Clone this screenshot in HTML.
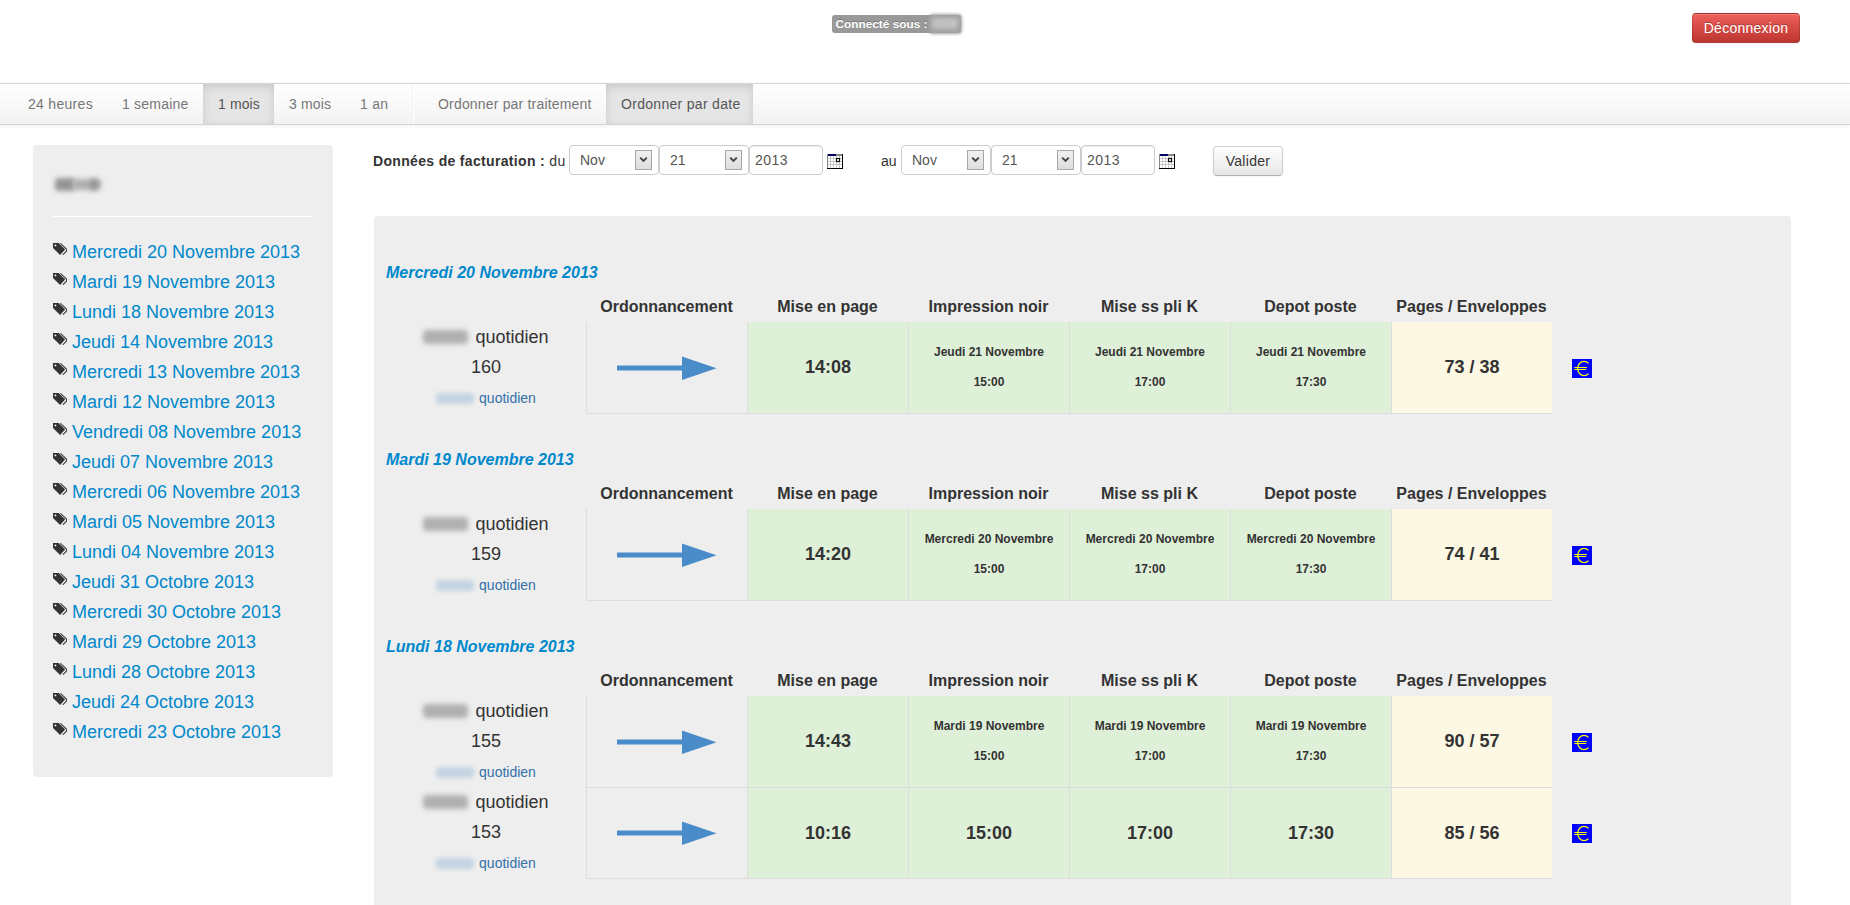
<!DOCTYPE html><html><head><meta charset="utf-8"><title>Facturation</title><style>
*{box-sizing:border-box}
html,body{margin:0;padding:0}
body{width:1850px;height:905px;overflow:hidden;position:relative;background:#fff;font-family:"Liberation Sans", sans-serif;color:#333;font-size:14px;line-height:20px}
.a{position:absolute;white-space:nowrap}
.lbl{left:832px;top:15px;width:129px;height:18px;background:#999;border-radius:3px;color:#fff;font-weight:bold;font-size:11.844px;line-height:14px;padding:2px 4px;text-shadow:0 -1px 0 rgba(0,0,0,.25);overflow:visible}
.blur-g{position:absolute;background:#b4b4b4;filter:blur(2px);border-radius:3px}
.btn-danger{left:1692px;top:13px;width:108px;height:30px;border-radius:4px;color:#fff;text-align:center;font-size:14px;line-height:20px;padding:4px 0;
 background:linear-gradient(#ee5f5b,#bd362f);border:1px solid rgba(0,0,0,.15);border-bottom-color:rgba(0,0,0,.3);box-shadow:inset 0 1px 0 rgba(255,255,255,.2),0 1px 2px rgba(0,0,0,.05);text-shadow:0 -1px 0 rgba(0,0,0,.25)}
.navbar{left:0;top:83px;width:1850px;height:42px;background:linear-gradient(#ffffff,#f2f2f2);border-top:1px solid #d4d4d4;border-bottom:1px solid #d4d4d4;box-shadow:0 1px 4px rgba(0,0,0,.065)}
.nav a{position:absolute;top:0;height:40px;padding:10px 0 10px 15px;color:#777;font-size:14px;line-height:20px;white-space:nowrap}
.nav a.act{background:#e5e5e5;color:#555;box-shadow:inset 0 3px 8px rgba(0,0,0,.125)}
.divv{position:absolute;top:0;height:40px;width:2px;border-left:1px solid #f2f2f2;border-right:1px solid #fff}
.well{left:33px;top:145px;width:300px;height:632px;background:#eee;border-radius:4px}
.side a{position:absolute;left:72px;color:#0088cc;font-size:18px;line-height:30px;white-space:nowrap}
.tag{position:absolute;left:53px}
.fl{font-size:14px;line-height:20px}
.sel{position:absolute;top:145px;height:30px;width:90px;border:1px solid #ccc;border-radius:4px;background:#fff;color:#555}
.sel .t{position:absolute;left:10px;top:4px;font-size:14px;line-height:20px}
.sel .ar{position:absolute;left:65px;top:4px;width:17px;height:20px;border:1px solid #a6a6a6;background:linear-gradient(#f0f0f0,#dedede)}
.inp{position:absolute;top:145px;height:30px;width:74px;border:1px solid #ccc;border-radius:4px;background:#fff;color:#555;box-shadow:inset 0 1px 1px rgba(0,0,0,.075)}
.inp .t{position:absolute;left:6px;top:4px;font-size:14px;line-height:20px}
.btn{left:1213px;top:146px;width:70px;height:30px;border-radius:4px;text-align:center;font-size:14px;line-height:20px;padding:4px 0;color:#333;
 background:linear-gradient(#ffffff,#e6e6e6);border:1px solid #cfcfcf;border-bottom-color:#b3b3b3;box-shadow:inset 0 1px 0 rgba(255,255,255,.2),0 1px 2px rgba(0,0,0,.05);text-shadow:0 1px 1px rgba(255,255,255,.75)}
.main{left:374px;top:216px;width:1417px;height:720px;background:#eee;border-radius:4px}
.ttl{position:absolute;left:386px;color:#0088cc;font-weight:bold;font-style:italic;font-size:16px;line-height:20px;white-space:nowrap}
.th{position:absolute;width:161px;text-align:center;font-weight:bold;font-size:16px;line-height:20px;white-space:nowrap}
.cell{position:absolute;width:161px;border-left:1px solid #ddd;border-bottom:1px solid #ddd}
.g{background:#dff0d8}
.y{background:#fcf8e3}
.ct{position:absolute;left:0;width:100%;text-align:center;font-weight:bold;white-space:nowrap}
.big{font-size:18px;line-height:30px}
.sm{font-size:12px;line-height:20px}
.lc{position:absolute;left:386px;width:200px;text-align:center;white-space:nowrap}
.q1{font-size:18px;line-height:30px;color:#333}
.q3{font-size:14px;line-height:20px;color:#3370a8}
.bn{display:inline-block;width:45px;height:14px;vertical-align:-1px;background:#b0b0b0;filter:blur(2.5px);border-radius:4px;margin-right:7px}
.bl{display:inline-block;width:38px;height:11px;vertical-align:-1px;background:#c3d4e2;filter:blur(2px);border-radius:4px;margin-right:5px}
</style></head><body>
<div class="a lbl" style="padding-left:3.5px">Connecté sous : </div><div class="blur-g" style="left:929px;top:14px;width:33px;height:20px;background:#a2a2a2;filter:blur(1.5px);border-radius:4px"></div><div class="blur-g" style="left:932px;top:18px;width:26px;height:11px;background:#c2c2c2;filter:blur(2px)"></div>
<div class="a btn-danger" style="letter-spacing:0.25px">Déconnexion</div>
<div class="a navbar"><div class="nav">
<a class="" style="left:13px;width:94px;letter-spacing:0.3px">24 heures</a>
<a class="" style="left:107px;width:96px;letter-spacing:0.22px">1 semaine</a>
<a class="act" style="left:203px;width:71px;letter-spacing:0.1px">1 mois</a>
<a class="" style="left:274px;width:71px;letter-spacing:0.15px">3 mois</a>
<a class="" style="left:345px;width:58px;letter-spacing:0.25px">1 an</a>
<a class="" style="left:423px;width:183px;letter-spacing:0.18px">Ordonner par traitement</a>
<a class="act" style="left:606px;width:147px;letter-spacing:0.3px">Ordonner par date</a>
<div class="divv" style="left:412px"></div>
</div></div>
<div class="a well"></div>
<div class="blur-g" style="left:55px;top:178px;width:20px;height:13px;background:#959595;filter:blur(2.5px)"></div>
<div class="blur-g" style="left:73px;top:179px;width:16px;height:11px;background:#b0b0b0;filter:blur(2.5px)"></div>
<div class="blur-g" style="left:87px;top:178px;width:14px;height:13px;background:#999;filter:blur(2.5px);border-radius:6px"></div>
<div class="a" style="left:53px;top:215px;width:260px;height:2px;border-top:1px solid #eee;border-bottom:1px solid #fff"></div>
<div class="side">
<div class="tag" style="top:243px;line-height:0"><svg width="14" height="12" viewBox="0 0 14 12" style="display:block"><path d="M0 0H5.6L12.1 6.6L7.1 12L0 5.1Z" fill="#333"/><circle cx="2.4" cy="2.4" r="0.95" fill="#f4f4f4"/><path d="M7.4 0.4L13.6 6.2V8L9.8 11.8" fill="none" stroke="#4a4a4a" stroke-width="1.2"/></svg></div>
<a style="top:236.76px">Mercredi 20 Novembre 2013</a>
<div class="tag" style="top:273px;line-height:0"><svg width="14" height="12" viewBox="0 0 14 12" style="display:block"><path d="M0 0H5.6L12.1 6.6L7.1 12L0 5.1Z" fill="#333"/><circle cx="2.4" cy="2.4" r="0.95" fill="#f4f4f4"/><path d="M7.4 0.4L13.6 6.2V8L9.8 11.8" fill="none" stroke="#4a4a4a" stroke-width="1.2"/></svg></div>
<a style="top:266.76px">Mardi 19 Novembre 2013</a>
<div class="tag" style="top:303px;line-height:0"><svg width="14" height="12" viewBox="0 0 14 12" style="display:block"><path d="M0 0H5.6L12.1 6.6L7.1 12L0 5.1Z" fill="#333"/><circle cx="2.4" cy="2.4" r="0.95" fill="#f4f4f4"/><path d="M7.4 0.4L13.6 6.2V8L9.8 11.8" fill="none" stroke="#4a4a4a" stroke-width="1.2"/></svg></div>
<a style="top:296.76px">Lundi 18 Novembre 2013</a>
<div class="tag" style="top:333px;line-height:0"><svg width="14" height="12" viewBox="0 0 14 12" style="display:block"><path d="M0 0H5.6L12.1 6.6L7.1 12L0 5.1Z" fill="#333"/><circle cx="2.4" cy="2.4" r="0.95" fill="#f4f4f4"/><path d="M7.4 0.4L13.6 6.2V8L9.8 11.8" fill="none" stroke="#4a4a4a" stroke-width="1.2"/></svg></div>
<a style="top:326.76px">Jeudi 14 Novembre 2013</a>
<div class="tag" style="top:363px;line-height:0"><svg width="14" height="12" viewBox="0 0 14 12" style="display:block"><path d="M0 0H5.6L12.1 6.6L7.1 12L0 5.1Z" fill="#333"/><circle cx="2.4" cy="2.4" r="0.95" fill="#f4f4f4"/><path d="M7.4 0.4L13.6 6.2V8L9.8 11.8" fill="none" stroke="#4a4a4a" stroke-width="1.2"/></svg></div>
<a style="top:356.76px">Mercredi 13 Novembre 2013</a>
<div class="tag" style="top:393px;line-height:0"><svg width="14" height="12" viewBox="0 0 14 12" style="display:block"><path d="M0 0H5.6L12.1 6.6L7.1 12L0 5.1Z" fill="#333"/><circle cx="2.4" cy="2.4" r="0.95" fill="#f4f4f4"/><path d="M7.4 0.4L13.6 6.2V8L9.8 11.8" fill="none" stroke="#4a4a4a" stroke-width="1.2"/></svg></div>
<a style="top:386.76px">Mardi 12 Novembre 2013</a>
<div class="tag" style="top:423px;line-height:0"><svg width="14" height="12" viewBox="0 0 14 12" style="display:block"><path d="M0 0H5.6L12.1 6.6L7.1 12L0 5.1Z" fill="#333"/><circle cx="2.4" cy="2.4" r="0.95" fill="#f4f4f4"/><path d="M7.4 0.4L13.6 6.2V8L9.8 11.8" fill="none" stroke="#4a4a4a" stroke-width="1.2"/></svg></div>
<a style="top:416.76px">Vendredi 08 Novembre 2013</a>
<div class="tag" style="top:453px;line-height:0"><svg width="14" height="12" viewBox="0 0 14 12" style="display:block"><path d="M0 0H5.6L12.1 6.6L7.1 12L0 5.1Z" fill="#333"/><circle cx="2.4" cy="2.4" r="0.95" fill="#f4f4f4"/><path d="M7.4 0.4L13.6 6.2V8L9.8 11.8" fill="none" stroke="#4a4a4a" stroke-width="1.2"/></svg></div>
<a style="top:446.76px">Jeudi 07 Novembre 2013</a>
<div class="tag" style="top:483px;line-height:0"><svg width="14" height="12" viewBox="0 0 14 12" style="display:block"><path d="M0 0H5.6L12.1 6.6L7.1 12L0 5.1Z" fill="#333"/><circle cx="2.4" cy="2.4" r="0.95" fill="#f4f4f4"/><path d="M7.4 0.4L13.6 6.2V8L9.8 11.8" fill="none" stroke="#4a4a4a" stroke-width="1.2"/></svg></div>
<a style="top:476.76px">Mercredi 06 Novembre 2013</a>
<div class="tag" style="top:513px;line-height:0"><svg width="14" height="12" viewBox="0 0 14 12" style="display:block"><path d="M0 0H5.6L12.1 6.6L7.1 12L0 5.1Z" fill="#333"/><circle cx="2.4" cy="2.4" r="0.95" fill="#f4f4f4"/><path d="M7.4 0.4L13.6 6.2V8L9.8 11.8" fill="none" stroke="#4a4a4a" stroke-width="1.2"/></svg></div>
<a style="top:506.76px">Mardi 05 Novembre 2013</a>
<div class="tag" style="top:543px;line-height:0"><svg width="14" height="12" viewBox="0 0 14 12" style="display:block"><path d="M0 0H5.6L12.1 6.6L7.1 12L0 5.1Z" fill="#333"/><circle cx="2.4" cy="2.4" r="0.95" fill="#f4f4f4"/><path d="M7.4 0.4L13.6 6.2V8L9.8 11.8" fill="none" stroke="#4a4a4a" stroke-width="1.2"/></svg></div>
<a style="top:536.76px">Lundi 04 Novembre 2013</a>
<div class="tag" style="top:573px;line-height:0"><svg width="14" height="12" viewBox="0 0 14 12" style="display:block"><path d="M0 0H5.6L12.1 6.6L7.1 12L0 5.1Z" fill="#333"/><circle cx="2.4" cy="2.4" r="0.95" fill="#f4f4f4"/><path d="M7.4 0.4L13.6 6.2V8L9.8 11.8" fill="none" stroke="#4a4a4a" stroke-width="1.2"/></svg></div>
<a style="top:566.76px">Jeudi 31 Octobre 2013</a>
<div class="tag" style="top:603px;line-height:0"><svg width="14" height="12" viewBox="0 0 14 12" style="display:block"><path d="M0 0H5.6L12.1 6.6L7.1 12L0 5.1Z" fill="#333"/><circle cx="2.4" cy="2.4" r="0.95" fill="#f4f4f4"/><path d="M7.4 0.4L13.6 6.2V8L9.8 11.8" fill="none" stroke="#4a4a4a" stroke-width="1.2"/></svg></div>
<a style="top:596.76px">Mercredi 30 Octobre 2013</a>
<div class="tag" style="top:633px;line-height:0"><svg width="14" height="12" viewBox="0 0 14 12" style="display:block"><path d="M0 0H5.6L12.1 6.6L7.1 12L0 5.1Z" fill="#333"/><circle cx="2.4" cy="2.4" r="0.95" fill="#f4f4f4"/><path d="M7.4 0.4L13.6 6.2V8L9.8 11.8" fill="none" stroke="#4a4a4a" stroke-width="1.2"/></svg></div>
<a style="top:626.76px">Mardi 29 Octobre 2013</a>
<div class="tag" style="top:663px;line-height:0"><svg width="14" height="12" viewBox="0 0 14 12" style="display:block"><path d="M0 0H5.6L12.1 6.6L7.1 12L0 5.1Z" fill="#333"/><circle cx="2.4" cy="2.4" r="0.95" fill="#f4f4f4"/><path d="M7.4 0.4L13.6 6.2V8L9.8 11.8" fill="none" stroke="#4a4a4a" stroke-width="1.2"/></svg></div>
<a style="top:656.76px">Lundi 28 Octobre 2013</a>
<div class="tag" style="top:693px;line-height:0"><svg width="14" height="12" viewBox="0 0 14 12" style="display:block"><path d="M0 0H5.6L12.1 6.6L7.1 12L0 5.1Z" fill="#333"/><circle cx="2.4" cy="2.4" r="0.95" fill="#f4f4f4"/><path d="M7.4 0.4L13.6 6.2V8L9.8 11.8" fill="none" stroke="#4a4a4a" stroke-width="1.2"/></svg></div>
<a style="top:686.76px">Jeudi 24 Octobre 2013</a>
<div class="tag" style="top:723px;line-height:0"><svg width="14" height="12" viewBox="0 0 14 12" style="display:block"><path d="M0 0H5.6L12.1 6.6L7.1 12L0 5.1Z" fill="#333"/><circle cx="2.4" cy="2.4" r="0.95" fill="#f4f4f4"/><path d="M7.4 0.4L13.6 6.2V8L9.8 11.8" fill="none" stroke="#4a4a4a" stroke-width="1.2"/></svg></div>
<a style="top:716.76px">Mercredi 23 Octobre 2013</a>
</div>
<div class="a fl" style="left:373px;top:151.15px"><b style="letter-spacing:0.33px">Données de facturation :</b><span style="letter-spacing:0.4px"> du</span></div>
<div class="sel" style="left:569px"><span class="t">Nov</span><span class="ar"><svg width="15" height="18" viewBox="0 0 15 18" style="position:absolute;left:0;top:0"><path d="M4.2 6.6L7.5 9.9L10.8 6.6" fill="none" stroke="#444" stroke-width="2"/></svg></span></div>
<div class="sel" style="left:659px"><span class="t">21</span><span class="ar"><svg width="15" height="18" viewBox="0 0 15 18" style="position:absolute;left:0;top:0"><path d="M4.2 6.6L7.5 9.9L10.8 6.6" fill="none" stroke="#444" stroke-width="2"/></svg></span></div>
<div class="inp" style="left:749px"><span class="t" style="left:5px;letter-spacing:0.45px">2013</span></div>
<div class="a" style="left:827px;top:154px;width:16px;height:15px"><svg width="16" height="15" viewBox="0 0 16 15"><rect x="0" y="0" width="16" height="15" fill="#fff"/>
<rect x="0" y="0" width="9" height="2" fill="#000066"/><rect x="9" y="0" width="7" height="2" fill="#888"/>
<g fill="#c8c8c8"><rect x="0" y="4" width="16" height="1"/><rect x="0" y="7" width="16" height="1"/><rect x="0" y="10" width="16" height="1"/>
<rect x="3" y="2" width="1" height="12"/><rect x="6" y="2" width="1" height="12"/><rect x="9" y="2" width="1" height="12"/><rect x="12" y="2" width="1" height="12"/></g>
<rect x="0" y="0" width="1" height="15" fill="#888"/><rect x="15" y="0" width="1" height="15" fill="#000"/><rect x="0" y="14" width="16" height="1" fill="#000"/>
<rect x="9.5" y="4.5" width="3" height="3" fill="none" stroke="#111" stroke-width="1.2"/></svg></div>
<div class="a fl" style="left:881px;top:151.15px">au</div>
<div class="sel" style="left:901px"><span class="t">Nov</span><span class="ar"><svg width="15" height="18" viewBox="0 0 15 18" style="position:absolute;left:0;top:0"><path d="M4.2 6.6L7.5 9.9L10.8 6.6" fill="none" stroke="#444" stroke-width="2"/></svg></span></div>
<div class="sel" style="left:991px"><span class="t">21</span><span class="ar"><svg width="15" height="18" viewBox="0 0 15 18" style="position:absolute;left:0;top:0"><path d="M4.2 6.6L7.5 9.9L10.8 6.6" fill="none" stroke="#444" stroke-width="2"/></svg></span></div>
<div class="inp" style="left:1081px"><span class="t" style="left:5px;letter-spacing:0.45px">2013</span></div>
<div class="a" style="left:1159px;top:154px;width:16px;height:15px"><svg width="16" height="15" viewBox="0 0 16 15"><rect x="0" y="0" width="16" height="15" fill="#fff"/>
<rect x="0" y="0" width="9" height="2" fill="#000066"/><rect x="9" y="0" width="7" height="2" fill="#888"/>
<g fill="#c8c8c8"><rect x="0" y="4" width="16" height="1"/><rect x="0" y="7" width="16" height="1"/><rect x="0" y="10" width="16" height="1"/>
<rect x="3" y="2" width="1" height="12"/><rect x="6" y="2" width="1" height="12"/><rect x="9" y="2" width="1" height="12"/><rect x="12" y="2" width="1" height="12"/></g>
<rect x="0" y="0" width="1" height="15" fill="#888"/><rect x="15" y="0" width="1" height="15" fill="#000"/><rect x="0" y="14" width="16" height="1" fill="#000"/>
<rect x="9.5" y="4.5" width="3" height="3" fill="none" stroke="#111" stroke-width="1.2"/></svg></div>
<div class="a btn" style="letter-spacing:0.3px">Valider</div>
<div class="a main"></div>
<div class="ttl" style="top:263.26px">Mercredi 20 Novembre 2013</div>
<div class="th" style="left:586px;top:297.06px">Ordonnancement</div>
<div class="th" style="left:747px;top:297.06px">Mise en page</div>
<div class="th" style="left:908px;top:297.06px">Impression noir</div>
<div class="th" style="left:1069px;top:297.06px">Mise ss pli K</div>
<div class="th" style="left:1230px;top:297.06px">Depot poste</div>
<div class="th" style="left:1391px;top:297.06px">Pages / Enveloppes</div>
<div class="lc q1" style="top:322.36px"><span class="bn"></span>quotidien</div>
<div class="lc q1" style="top:351.76px">160</div>
<div class="lc q3" style="top:387.55px"><span class="bl"></span>quotidien</div>
<div class="cell " style="left:586px;top:322px;height:92px">
<div style="position:absolute;left:30px;top:34px"><svg width="100" height="25" viewBox="0 0 100 25"><rect x="0" y="9.5" width="66" height="5" fill="#4a8bca"/><path d="M65 0.5L99.5 12.2L65 24Z" fill="#4a8bca"/></svg></div>
</div>
<div class="cell g" style="left:747px;top:322px;height:92px">
<div class="ct big" style="top:29.56px">14:08</div>
</div>
<div class="cell g" style="left:908px;top:322px;height:92px">
<div class="ct sm" style="top:20.44px">Jeudi 21 Novembre</div>
<div class="ct sm" style="top:49.74px">15:00</div>
</div>
<div class="cell g" style="left:1069px;top:322px;height:92px">
<div class="ct sm" style="top:20.44px">Jeudi 21 Novembre</div>
<div class="ct sm" style="top:49.74px">17:00</div>
</div>
<div class="cell g" style="left:1230px;top:322px;height:92px">
<div class="ct sm" style="top:20.44px">Jeudi 21 Novembre</div>
<div class="ct sm" style="top:49.74px">17:30</div>
</div>
<div class="cell y" style="left:1391px;top:322px;height:92px">
<div class="ct big" style="top:29.56px">73 / 38</div>
</div>
<div class="a" style="left:1572px;top:359px;width:20px;height:19px;line-height:0"><svg width="20" height="19" viewBox="0 0 20 19" style="display:block"><rect width="20" height="19" fill="#0000ff"/><path d="M16.5 4.4A6.4 7.1 0 1 0 16.5 14.6" fill="none" stroke="#ffff00" stroke-width="1.25"/><path d="M2.3 8.5H14.9M2.3 10.5H14.3" stroke="#ffff00" stroke-width="1"/></svg></div>
<div class="ttl" style="top:450.26px">Mardi 19 Novembre 2013</div>
<div class="th" style="left:586px;top:484.06px">Ordonnancement</div>
<div class="th" style="left:747px;top:484.06px">Mise en page</div>
<div class="th" style="left:908px;top:484.06px">Impression noir</div>
<div class="th" style="left:1069px;top:484.06px">Mise ss pli K</div>
<div class="th" style="left:1230px;top:484.06px">Depot poste</div>
<div class="th" style="left:1391px;top:484.06px">Pages / Enveloppes</div>
<div class="lc q1" style="top:509.36px"><span class="bn"></span>quotidien</div>
<div class="lc q1" style="top:538.76px">159</div>
<div class="lc q3" style="top:574.55px"><span class="bl"></span>quotidien</div>
<div class="cell " style="left:586px;top:509px;height:92px">
<div style="position:absolute;left:30px;top:34px"><svg width="100" height="25" viewBox="0 0 100 25"><rect x="0" y="9.5" width="66" height="5" fill="#4a8bca"/><path d="M65 0.5L99.5 12.2L65 24Z" fill="#4a8bca"/></svg></div>
</div>
<div class="cell g" style="left:747px;top:509px;height:92px">
<div class="ct big" style="top:29.56px">14:20</div>
</div>
<div class="cell g" style="left:908px;top:509px;height:92px">
<div class="ct sm" style="top:20.44px">Mercredi 20 Novembre</div>
<div class="ct sm" style="top:49.74px">15:00</div>
</div>
<div class="cell g" style="left:1069px;top:509px;height:92px">
<div class="ct sm" style="top:20.44px">Mercredi 20 Novembre</div>
<div class="ct sm" style="top:49.74px">17:00</div>
</div>
<div class="cell g" style="left:1230px;top:509px;height:92px">
<div class="ct sm" style="top:20.44px">Mercredi 20 Novembre</div>
<div class="ct sm" style="top:49.74px">17:30</div>
</div>
<div class="cell y" style="left:1391px;top:509px;height:92px">
<div class="ct big" style="top:29.56px">74 / 41</div>
</div>
<div class="a" style="left:1572px;top:546px;width:20px;height:19px;line-height:0"><svg width="20" height="19" viewBox="0 0 20 19" style="display:block"><rect width="20" height="19" fill="#0000ff"/><path d="M16.5 4.4A6.4 7.1 0 1 0 16.5 14.6" fill="none" stroke="#ffff00" stroke-width="1.25"/><path d="M2.3 8.5H14.9M2.3 10.5H14.3" stroke="#ffff00" stroke-width="1"/></svg></div>
<div class="ttl" style="top:637.26px">Lundi 18 Novembre 2013</div>
<div class="th" style="left:586px;top:671.06px">Ordonnancement</div>
<div class="th" style="left:747px;top:671.06px">Mise en page</div>
<div class="th" style="left:908px;top:671.06px">Impression noir</div>
<div class="th" style="left:1069px;top:671.06px">Mise ss pli K</div>
<div class="th" style="left:1230px;top:671.06px">Depot poste</div>
<div class="th" style="left:1391px;top:671.06px">Pages / Enveloppes</div>
<div class="lc q1" style="top:696.36px"><span class="bn"></span>quotidien</div>
<div class="lc q1" style="top:725.76px">155</div>
<div class="lc q3" style="top:761.55px"><span class="bl"></span>quotidien</div>
<div class="cell " style="left:586px;top:696px;height:92px">
<div style="position:absolute;left:30px;top:34px"><svg width="100" height="25" viewBox="0 0 100 25"><rect x="0" y="9.5" width="66" height="5" fill="#4a8bca"/><path d="M65 0.5L99.5 12.2L65 24Z" fill="#4a8bca"/></svg></div>
</div>
<div class="cell g" style="left:747px;top:696px;height:92px">
<div class="ct big" style="top:29.56px">14:43</div>
</div>
<div class="cell g" style="left:908px;top:696px;height:92px">
<div class="ct sm" style="top:20.44px">Mardi 19 Novembre</div>
<div class="ct sm" style="top:49.74px">15:00</div>
</div>
<div class="cell g" style="left:1069px;top:696px;height:92px">
<div class="ct sm" style="top:20.44px">Mardi 19 Novembre</div>
<div class="ct sm" style="top:49.74px">17:00</div>
</div>
<div class="cell g" style="left:1230px;top:696px;height:92px">
<div class="ct sm" style="top:20.44px">Mardi 19 Novembre</div>
<div class="ct sm" style="top:49.74px">17:30</div>
</div>
<div class="cell y" style="left:1391px;top:696px;height:92px">
<div class="ct big" style="top:29.56px">90 / 57</div>
</div>
<div class="a" style="left:1572px;top:733px;width:20px;height:19px;line-height:0"><svg width="20" height="19" viewBox="0 0 20 19" style="display:block"><rect width="20" height="19" fill="#0000ff"/><path d="M16.5 4.4A6.4 7.1 0 1 0 16.5 14.6" fill="none" stroke="#ffff00" stroke-width="1.25"/><path d="M2.3 8.5H14.9M2.3 10.5H14.3" stroke="#ffff00" stroke-width="1"/></svg></div>
<div class="lc q1" style="top:787.36px"><span class="bn"></span>quotidien</div>
<div class="lc q1" style="top:816.76px">153</div>
<div class="lc q3" style="top:852.55px"><span class="bl"></span>quotidien</div>
<div class="cell " style="left:586px;top:788px;height:91px">
<div style="position:absolute;left:30px;top:33px"><svg width="100" height="25" viewBox="0 0 100 25"><rect x="0" y="9.5" width="66" height="5" fill="#4a8bca"/><path d="M65 0.5L99.5 12.2L65 24Z" fill="#4a8bca"/></svg></div>
</div>
<div class="cell g" style="left:747px;top:788px;height:91px">
<div class="ct big" style="top:29.56px">10:16</div>
</div>
<div class="cell g" style="left:908px;top:788px;height:91px">
<div class="ct big" style="top:29.56px">15:00</div>
</div>
<div class="cell g" style="left:1069px;top:788px;height:91px">
<div class="ct big" style="top:29.56px">17:00</div>
</div>
<div class="cell g" style="left:1230px;top:788px;height:91px">
<div class="ct big" style="top:29.56px">17:30</div>
</div>
<div class="cell y" style="left:1391px;top:788px;height:91px">
<div class="ct big" style="top:29.56px">85 / 56</div>
</div>
<div class="a" style="left:1572px;top:824px;width:20px;height:19px;line-height:0"><svg width="20" height="19" viewBox="0 0 20 19" style="display:block"><rect width="20" height="19" fill="#0000ff"/><path d="M16.5 4.4A6.4 7.1 0 1 0 16.5 14.6" fill="none" stroke="#ffff00" stroke-width="1.25"/><path d="M2.3 8.5H14.9M2.3 10.5H14.3" stroke="#ffff00" stroke-width="1"/></svg></div>
</body></html>
